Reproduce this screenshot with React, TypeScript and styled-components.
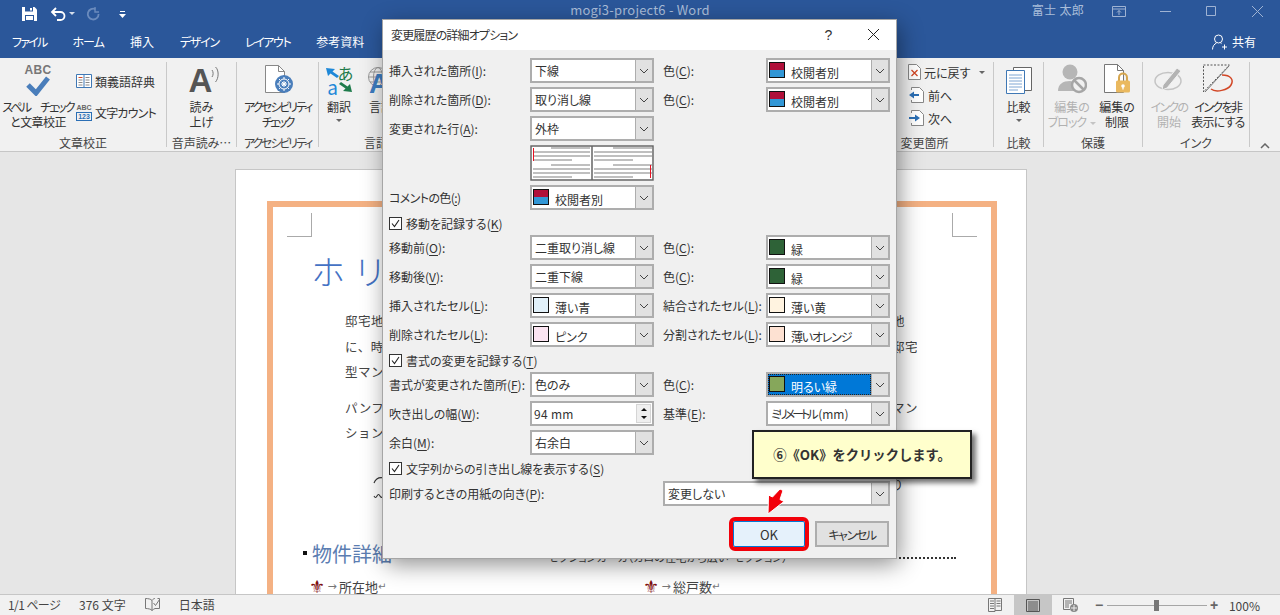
import styled, { createGlobalStyle } from "styled-components";
import type { ReactNode } from "react";

const GlobalStyle = createGlobalStyle`
  html, body { margin: 0; padding: 0; background: #e6e6e6; }
  body {
    font-family: "Noto Sans CJK JP", "Noto Sans", sans-serif;
    font-feature-settings: "palt";
    font-size: 12px;
    color: #333;
  }
  u { text-underline-offset: 2px; }
`;

const Root = styled.div`
  position: relative;
  width: 1280px;
  height: 615px;
  overflow: hidden;
  display: flex;
  flex-direction: column;
`;

// the reference uses Meiryo UI, whose kana are much narrower than Noto's
const Squeezed = styled.span<{ $by: number }>`
  letter-spacing: ${({ $by }) => $by}px;
`;

/* ---------- title bar and tabs ---------- */

const TitleBar = styled.div`
  height: 28px;
  flex: none;
  background: #2b579a;
  display: grid;
  grid-template-columns: 1fr auto 1fr;
  align-items: center;
  color: #a9bdd9;
`;

const QuickAccess = styled.div`
  display: flex;
  align-items: center;
  padding-left: 22px;
`;

const QuickIcon = styled.span<{ $w: number }>`
  display: flex;
  width: ${({ $w }) => $w}px;
`;

const WindowArea = styled.div`
  display: flex;
  align-items: center;
  justify-content: flex-end;
`;

const UserName = styled.span`
  margin-right: 12px;
  line-height: 20px;
  letter-spacing: 0.3px;
  position: relative;
  top: -4px;
`;

const WindowButton = styled.span`
  width: 46px;
  display: flex;
  justify-content: center;
  position: relative;
  top: -3px;
`;

const TitleText = styled.span`
  position: relative;
  top: -5px;
  font-size: 13px;
  letter-spacing: 0.2px;
`;

const TabBar = styled.div`
  height: 30px;
  flex: none;
  box-sizing: border-box;
  padding-bottom: 3px;
  background: #2b579a;
  display: flex;
  align-items: center;
  color: #fff;
`;

const Tab = styled.span`
  padding: 0 13px;
  &:first-child {
    margin-left: -1px;
  }
`;

const Share = styled.span`
  margin-left: auto;
  margin-right: 24px;
  display: flex;
  align-items: center;
  gap: 4px;
`;

/* ---------- ribbon ---------- */

const Ribbon = styled.div`
  height: 94px;
  flex: none;
  box-sizing: border-box;
  background: #f1f1f1;
  border-bottom: 1px solid #c6c6c6;
  padding-top: 4px;
  display: flex;
  position: relative;
`;

const Group = styled.div<{ $w: number; $plain?: boolean }>`
  width: ${({ $w }) => $w}px;
  height: 85px;
  flex: none;
  box-sizing: border-box;
  border-right: ${({ $plain }) => ($plain ? "none" : "1px solid #c9c9c9")};
  display: flex;
  flex-direction: column;
`;

const Tools = styled.div<{ $pad?: number }>`
  height: 74px;
  display: flex;
  padding-left: ${({ $pad }) => $pad ?? 0}px;
`;

const GroupLabel = styled.div`
  height: 14px;
  line-height: 14px;
  margin-bottom: -3px;
  text-align: center;
  white-space: nowrap;
  overflow: visible;
  color: #444;
`;

const BigButton = styled.div<{ $w: number; $off?: boolean }>`
  width: ${({ $w }) => $w}px;
  flex: none;
  display: flex;
  flex-direction: column;
  align-items: center;
  color: ${({ $off }) => ($off ? "#b1b1b1" : "#333")};
`;

const BigIcon = styled.div<{ $lift?: number }>`
  height: 37px;
  box-sizing: border-box;
  padding-bottom: ${({ $lift }) => $lift ?? 5}px;
  display: flex;
  align-items: flex-end;
  justify-content: center;
  position: relative;
  flex: none;
`;

const BigText = styled.div`
  line-height: 15px;
  text-align: center;
  white-space: nowrap;
`;

const Caret = styled.div`
  width: 0;
  height: 0;
  margin-top: 5px;
  border-left: 3px solid transparent;
  border-right: 3px solid transparent;
  border-top: 3px solid #666;
`;

const InlineCaret = styled(Caret)`
  margin: 0 0 0 6px;
`;

const TinyCaret = styled.span`
  display: inline-block;
  width: 0;
  height: 0;
  margin-left: 4px;
  vertical-align: middle;
  border-left: 3px solid transparent;
  border-right: 3px solid transparent;
  border-top: 3px solid #c4c4c4;
`;

const SmallColumn = styled.div<{ $gap: number; $top: number }>`
  display: flex;
  flex-direction: column;
  gap: ${({ $gap }) => $gap}px;
  padding-top: ${({ $top }) => $top}px;
`;

const SmallButton = styled.div`
  display: flex;
  align-items: center;
  gap: 3px;
  height: 18px;
  white-space: nowrap;
`;

const SpellAbc = styled.div`
  position: absolute;
  top: 2px;
  left: -4px;
  width: 32px;
  text-align: center;
  font: bold 12px/12px "Liberation Sans", sans-serif;
  letter-spacing: 0.3px;
  color: #777;
`;

const TinyAbcIcon = styled.div`
  width: 16px;
  display: flex;
  flex-direction: column;
  align-items: center;
  font: bold 7px/7px "Liberation Sans", sans-serif;
  color: #666;
`;

const TinyDigits = styled.span`
  margin-top: 1px;
  width: 14px;
  text-align: center;
  border: 1px solid #2b6fb5;
  color: #2b6fb5;
`;

const ReadLetter = styled.span`
  margin-left: 7px;
  font: bold 33px/26px "Liberation Sans", sans-serif;
  height: 26px;
  color: #555;
`;

const WaveHolder = styled.span`
  align-self: flex-start;
  margin: 4px 0 0 -1px;
  display: flex;
`;

const TranslateGrid = styled.div`
  display: grid;
  grid-template-columns: 13px 13px;
  grid-template-rows: 14px 14px;
  align-items: center;
  justify-items: center;
`;

const LangGlyph = styled.span<{ $color: string; $size: number }>`
  color: ${({ $color }) => $color};
  font-size: ${({ $size }) => $size}px;
  line-height: 14px;
  height: 14px;
`;

const GlobeStack = styled.div`
  position: relative;
  width: 30px;
  height: 28px;
`;

const GlobeLetter = styled.span`
  position: absolute;
  left: 3px;
  bottom: 0;
  height: 22px;
  font: bold 28px/23px "Liberation Sans", sans-serif;
  color: #3d7cc0;
`;

const ChevronUpMark = styled.div`
  position: absolute;
  left: 1260px;
  top: 85px;
  display: flex;
`;

/* ---------- document ---------- */

const DocArea = styled.div`
  flex: 1;
  min-height: 0;
  overflow: hidden;
  background: #e6e6e6;
  padding: 17px 0 0 235px;
`;

const Page = styled.div`
  width: 792px;
  height: 800px;
  box-sizing: border-box;
  background: #fff;
  border: 1px solid #c6c6c6;
  padding: 31px 29px 0 31px;
`;

const Frame = styled.div`
  height: 760px;
  box-sizing: content-box;
  border: 6px solid #f4b183;
  padding: 6px 14px 0;
`;

const CropRow = styled.div`
  display: flex;
  justify-content: space-between;
`;

const CropMark = styled.div<{ $side: "left" | "right" }>`
  width: 24px;
  height: 23px;
  border-bottom: 1px solid #aaa;
  ${({ $side }) => ($side === "left" ? "border-right" : "border-left")}: 1px solid #aaa;
`;

const DocTitle = styled.h1`
  margin: 14px 0 0 24px;
  font-size: 34px;
  line-height: 40px;
  font-weight: 300;
  letter-spacing: 8px;
  font-feature-settings: normal;
  color: #4472c4;
`;

const BodyLines = styled.div<{ $top: number }>`
  margin: ${({ $top }) => $top}px 60px 0 58px;
`;

const BodyLine = styled.div`
  height: 25.5px;
  line-height: 25.5px;
  display: flex;
  justify-content: space-between;
  font-size: 12.5px;
  letter-spacing: 0.5px;
  color: #444;
  font-feature-settings: normal;
  white-space: nowrap;
`;

const LineEnd = styled.span`
  width: 25px;
  overflow: hidden;
`;

const SymbolRow = styled.div`
  margin: 30px 60px 0 86px;
  height: 30px;
  display: flex;
  justify-content: space-between;
  align-items: flex-start;
`;

const HeadingRow = styled.div`
  margin: 38px 21px 0 16px;
  height: 22px;
  display: flex;
  align-items: flex-start;
`;

const HeadingBullet = styled.span`
  width: 4px;
  height: 4px;
  margin: 7px 5px 0 0;
  background: #111;
  flex: none;
`;

const SectionHeading = styled.h2`
  margin: 0;
  font-size: 20px;
  line-height: 20px;
  font-weight: 400;
  color: #5b7db1;
  white-space: nowrap;
  width: 92px;
  flex: none;
`;

const Leader = styled.div`
  flex: 1;
  height: 13px;
  border-bottom: 2px dotted #333;
  font-size: 11px;
  line-height: 26px;
  padding-left: 144px;
  white-space: nowrap;
  overflow: visible;
  color: #444;
`;

const SpecRow = styled.div`
  margin: 11px 0 0 24px;
  display: grid;
  grid-template-columns: 334px 1fr;
`;

const SpecItem = styled.div`
  display: flex;
  align-items: center;
  font-size: 13px;
  line-height: 20px;
  color: #444;
  font-feature-settings: normal;
`;

const Fleur = styled.span`
  font: 18px/20px "DejaVu Sans", sans-serif;
  color: #7f1010;
  width: 14px;
  margin-left: -2px;
  margin-right: 2px;
`;

const TabArrow = styled.span`
  font: 11px/20px "DejaVu Sans", sans-serif;
  color: #777;
  width: 14px;
  text-align: center;
`;

const ReturnMark = styled.span`
  font: 10px/20px "DejaVu Sans", sans-serif;
  color: #777;
`;

/* ---------- status bar ---------- */

const StatusBar = styled.div`
  height: 21px;
  flex: none;
  box-sizing: border-box;
  background: #f1f1f1;
  border-top: 1px solid #c6c6c6;
  display: flex;
  align-items: stretch;
  justify-content: space-between;
  color: #444;
  padding: 0 20px 0 8px;
`;

const StatusLeft = styled.div`
  display: flex;
  align-items: center;
  gap: 19px;
  padding-bottom: 1px;
`;

const StatusRight = styled.div`
  display: flex;
  align-items: stretch;
`;

const ViewButton = styled.div<{ $active?: boolean }>`
  width: 38px;
  display: flex;
  align-items: center;
  justify-content: center;
  background: ${({ $active }) => ($active ? "#c6c6c6" : "transparent")};
`;

const ZoomControl = styled.div`
  display: flex;
  align-items: center;
  margin-left: 5px;
`;

const ZoomSign = styled.span`
  width: 8px;
  font: bold 14px/14px "Liberation Sans", sans-serif;
  color: #666;
  text-align: center;
`;

const ZoomTrack = styled.div`
  position: relative;
  width: 100px;
  height: 1px;
  margin: 0 3px 0 4px;
  background: #a6a6a6;
`;

const ZoomThumb = styled.div`
  position: absolute;
  left: 47px;
  top: -5px;
  width: 5px;
  height: 11px;
  background: #777;
`;

const ZoomValue = styled.span`
  margin-left: 11px;
  font-size: 12px;
`;

/* ---------- dialog ---------- */

const Dialog = styled.div`
  position: absolute;
  left: 383px;
  top: 20px;
  width: 513px;
  height: 538px;
  box-sizing: border-box;
  background: #f0f0f0;
  box-shadow: 0 0 0 1px #a5a5a5, 3px 6px 22px rgba(0, 0, 0, 0.45);
  display: flex;
  flex-direction: column;
`;

const DialogHead = styled.div`
  height: 30px;
  flex: none;
  box-sizing: border-box;
  padding: 0 0 1px 8px;
  background: #fff;
  display: flex;
  align-items: center;
  color: #333;
`;

const DialogTitle = styled.span`
  flex: 1;
`;

const HelpMark = styled.span`
  width: 45px;
  text-align: center;
  font: 14px "Liberation Sans", sans-serif;
`;

const CloseMark = styled.span`
  width: 45px;
  display: flex;
  justify-content: center;
`;

const Form = styled.div`
  padding: 8px 0 0 6px;
`;

const Row = styled.div`
  display: grid;
  grid-template-columns: 141px 124px 112px 124px;
  height: 25px;
  margin-bottom: 4px;
  align-items: center;
  white-space: nowrap;
`;

const PreviewRow = styled(Row)`
  height: 36px;
`;

const FieldLabel = styled.label<{ $wide?: boolean }>`
  padding-bottom: 1px;
  ${({ $wide }) => ($wide ? "grid-column: 1 / 3;" : "")}
`;

const SideLabel = styled.label`
  grid-column: 3;
  padding: 0 0 1px 9px;
`;

const Combo = styled.div<{ $wide?: boolean }>`
  ${({ $wide }) => ($wide ? "grid-column: 3 / 5; margin-left: 9px;" : "")}
  height: 25px;
  box-sizing: border-box;
  border: 2px solid #adadad;
  border-right-width: 1px;
  background: #fff;
  display: flex;
  align-items: stretch;
`;

const ComboValue = styled.div<{ $picked?: boolean }>`
  flex: 1;
  min-width: 0;
  display: flex;
  align-items: center;
  gap: 6px;
  padding: 0 0 1px 3px;
  ${({ $picked }) =>
    $picked
      ? `background: #0078d7; color: #fff; outline: 1px dotted #222; outline-offset: -1px;`
      : ""}
`;

const ComboText = styled.span`
  position: relative;
  top: 2px;
`;

const ComboArrow = styled.div`
  width: 16px;
  flex: none;
  background: #e1e1e1;
  border-left: 1px solid #adadad;
  border-right: 1px solid #adadad;
  display: flex;
  align-items: center;
  justify-content: center;
`;

const Swatch = styled.span<{ $top: string; $bottom?: string }>`
  width: 14px;
  height: 14px;
  flex: none;
  align-self: flex-start;
  margin: 2px 0 0 -2px;
  border: 1px solid #111;
  background: linear-gradient(
    ${({ $top }) => $top} 50%,
    ${({ $top, $bottom }) => $bottom ?? $top} 50%
  );
`;

const SpinBox = styled.div`
  height: 25px;
  box-sizing: border-box;
  border: 2px solid #adadad;
  background: #fff;
  display: flex;
  align-items: center;
  justify-content: space-between;
  padding: 0 0 0 2px;
  letter-spacing: 0.3px;
`;

const SpinButtons = styled.div`
  width: 15px;
  height: 19px;
  display: flex;
  flex-direction: column;
  align-items: center;
  justify-content: space-around;
  background: #efefef;
  border: 1px solid #d5d5d5;
  box-sizing: border-box;
  margin-right: 1px;
`;

const SpinTriangle = styled.span<{ $up?: boolean }>`
  width: 0;
  height: 0;
  border-left: 3px solid transparent;
  border-right: 3px solid transparent;
  ${({ $up }) => ($up ? "border-bottom" : "border-top")}: 3px solid #111;
`;

const CheckRow = styled.label<{ $late?: boolean }>`
  height: 18px;
  margin: ${({ $late }) => ($late ? "2px 0 4px" : "1px 0 3px")};
  display: flex;
  align-items: center;
  gap: 4px;
  white-space: nowrap;
`;

const CheckBox = styled.span`
  width: 11px;
  height: 11px;
  border: 1px solid #333;
  background: #fff;
  display: flex;
  align-items: center;
  justify-content: center;
`;

const DialogButtons = styled.div`
  display: flex;
  justify-content: flex-end;
  gap: 10px;
  margin-top: 15px;
  padding-right: 7px;
`;

const ActionButton = styled.button<{ $primary?: boolean }>`
  font: inherit;
  font-size: ${({ $primary }) => ($primary ? 13 : 12)}px;
  color: #333;
  padding: 0;
  height: 26px;
  width: ${({ $primary }) => ($primary ? 72 : 74)}px;
  background: ${({ $primary }) => ($primary ? "#e5f1fb" : "#e1e1e1")};
  border: ${({ $primary }) => ($primary ? "1px solid #0078d7" : "2px solid #adadad")};
  ${({ $primary }) =>
    $primary ? "outline: 4px solid #f2000a; outline-offset: 0; border-radius: 2px;" : ""}
`;

/* ---------- annotation ---------- */

const Callout = styled.div`
  position: absolute;
  left: 752px;
  top: 430px;
  width: 220px;
  height: 49px;
  box-sizing: border-box;
  background: #ffffcc;
  border: 2px solid #222;
  box-shadow: 4px 4px 5px rgba(0, 0, 0, 0.55);
  display: flex;
  align-items: center;
  justify-content: center;
  font-size: 13.3px;
  font-weight: 700;
  font-feature-settings: normal;
  white-space: nowrap;
  color: #333;
`;

const PointerArrow = styled.svg`
  position: absolute;
  left: 762px;
  top: 486px;
`;

/* ---------- drawings ---------- */

const Chevron = () => (
  <svg width="10" height="6" viewBox="0 0 10 6">
    <path d="M1 1l4 4 4-4" fill="none" stroke="#444" />
  </svg>
);

const Tick = () => (
  <svg width="9" height="9" viewBox="0 0 9 9">
    <path d="M1 4.500l2.500 3L8 1" fill="none" stroke="#222" strokeWidth="1.100" />
  </svg>
);

const SaveIcon = () => (
  <svg width="15" height="14" viewBox="0 0 15 14">
    <path d="M0 0h12.500L15 2.500V14H0z" fill="#fff" />
    <path d="M3 0h8v4.500H3z" fill="#2b579a" />
    <path d="M8 1h2v2.500H8z" fill="#fff" />
    <path d="M3 8h9v6H3z" fill="#2b579a" />
    <path d="M4 9h7v4H4z" fill="#fff" />
  </svg>
);

const UndoIcon = () => (
  <svg width="26" height="14" viewBox="0 0 26 14">
    <path d="M2 5h8.500a3.800 3.800 0 0 1 0 8H7" fill="none" stroke="#fff" strokeWidth="1.800" />
    <path d="M6 1L2 5l4 4" fill="none" stroke="#fff" strokeWidth="1.800" />
    <path d="M19 5h6l-3 3z" fill="#d5deeb" />
  </svg>
);

const RedoIcon = () => (
  <svg width="14" height="14" viewBox="0 0 14 14">
    <path d="M9.500 2.200A5.400 5.400 0 1 0 12.600 7" fill="none" stroke="#6b8bbd" strokeWidth="1.800" />
    <path d="M9 0v5h4" fill="none" stroke="#6b8bbd" strokeWidth="1.400" />
  </svg>
);

const CustomizeIcon = () => (
  <svg width="7" height="8" viewBox="0 0 7 8">
    <path d="M1 1h5v1H1z" fill="#fff" />
    <path d="M0 4h7L3.500 8z" fill="#fff" />
  </svg>
);

const RibbonDisplayIcon = () => (
  <svg width="14" height="11" viewBox="0 0 14 11">
    <path d="M.5.500h13v10H.5zM.5 3h13M7 9V4.500M5 6.500l2-2 2 2" fill="none" stroke="#9fb3d3" />
  </svg>
);

const MinimizeIcon = () => (
  <svg width="11" height="10" viewBox="0 0 11 10">
    <path d="M0 5.500h11" stroke="#9fb3d3" />
  </svg>
);

const MaximizeIcon = () => (
  <svg width="10" height="10" viewBox="0 0 10 10">
    <path d="M.5.500h9v9h-9z" fill="none" stroke="#9fb3d3" />
  </svg>
);

const CloseIcon = ({ color, size }: { color: string; size: number }) => (
  <svg width={size} height={size} viewBox="0 0 10 10">
    <path d="M0 0l10 10M10 0L0 10" stroke={color} strokeWidth={10 / size} />
  </svg>
);

const ShareIcon = () => (
  <svg width="16" height="16" viewBox="0 0 16 16">
    <circle cx="6.500" cy="5" r="4" fill="none" stroke="#fff" />
    <path d="M0.500 15.500c0-3.500 2-5.500 4-6.500M8.500 9l1 .6M10 13h5M12.500 10.500v5" fill="none" stroke="#fff" />
  </svg>
);

const CheckMark = () => (
  <svg width="24" height="21" viewBox="0 0 24 21">
    <path d="M2 10l8 8L22 3" fill="none" stroke="#4a7ebb" strokeWidth="5" />
  </svg>
);

const BookIcon = () => (
  <svg width="16" height="14" viewBox="0 0 16 14">
    <path d="M.5.500h15v13H.500z" fill="#fff" stroke="#3f78b5" />
    <path d="M8 1v12" stroke="#3f78b5" />
    <path d="M2.500 3.500h4" stroke="#d24726" />
    <path d="M2.500 6h4M2.500 8.500h4M2.500 11h4M9.500 3.500h4M9.500 6h4M9.500 8.500h4M9.500 11h4" stroke="#888" />
  </svg>
);

const SoundWaves = () => (
  <svg width="10" height="17" viewBox="0 0 10 17">
    <path d="M1 4c1.500 2 1.500 5 0 7M4.500 1c3.500 3 3.500 11 0 15" fill="none" stroke="#777" />
  </svg>
);

const AccessibilityIcon = () => (
  <svg width="32" height="29" viewBox="0 0 32 29">
    <path d="M3.500.5h13l6 6v21h-19z" fill="#fff" stroke="#888" />
    <path d="M16.500.5v6h6" fill="none" stroke="#888" />
    <circle cx="22" cy="19" r="9" fill="#4a7ebb" />
    <circle cx="22" cy="19" r="5" fill="none" stroke="#fff" />
    <path d="M22 12v14M15 19h14M17 14l10 10M27 14L17 24" stroke="#fff" strokeDasharray="2 2" />
    <circle cx="22" cy="19" r="1.500" fill="#fff" />
  </svg>
);

const LeftArrowBlue = () => (
  <svg width="13" height="12" viewBox="0 0 13 12">
    <path d="M0 1l9 1-2.500 2.500L13 9l-2 2-6.500-4.500L2 9z" fill="#1e88d8" />
  </svg>
);

const RightArrowGreen = () => (
  <svg width="13" height="12" viewBox="0 0 13 12">
    <path d="M13 11l-9-1 2.500-2.500L0 3l2-2 6.500 4.500L11 3z" fill="#1e7b4b" />
  </svg>
);

const GlobeIcon = () => (
  <svg width="30" height="22" viewBox="0 0 30 22">
    <g fill="none" stroke="#999">
      <circle cx="12" cy="11" r="9.500" />
      <ellipse cx="12" cy="11" rx="4.500" ry="9.500" />
      <path d="M2.500 11h19M4 6h16M4 16h16" />
    </g>
  </svg>
);

const RejectIcon = () => (
  <svg width="13" height="16" viewBox="0 0 13 16">
    <path d="M.5.500h8l4 4v11H.500z" fill="#fff" stroke="#888" />
    <path d="M3.500 6l6 6M9.500 6l-6 6" stroke="#d24726" strokeWidth="1.300" />
  </svg>
);

const StepIcon = ({ back }: { back?: boolean }) => (
  <svg width="17" height="16" viewBox="0 0 17 16">
    <path d="M3.500 3V.5h8l4 4v11h-12V13" fill="#fff" stroke="#888" />
    {back ? (
      <path d="M11 7H6V4.500L1 8l5 3.500V9h5z" fill="#2b6fb5" />
    ) : (
      <path d="M1 7h6V4.500L12 8l-5 3.500V9H1z" fill="#2b6fb5" />
    )}
  </svg>
);

const CompareIcon = () => (
  <svg width="26" height="27" viewBox="0 0 26 27">
    <path d="M7.500.5h18v23h-18z" fill="#fff" stroke="#666" />
    <path d="M.5 3.500h18v23H.500z" fill="#fff" stroke="#3f78b5" />
    <path d="M3 8h13M3 11h13M3 14h13M3 17h13M3 20h13M3 23h9" stroke="#7fa6d3" />
  </svg>
);

const BlockIcon = () => (
  <svg width="30" height="30" viewBox="0 0 30 30">
    <circle cx="13" cy="8" r="7.500" fill="#b6b6b6" />
    <path d="M1 27c0-7 5-10 12-10s6 10 4 10z" fill="#b6b6b6" />
    <circle cx="22" cy="21" r="7" fill="#f1f1f1" stroke="#a6a6a6" strokeWidth="2.500" />
    <path d="M17 16l10 10" stroke="#a6a6a6" strokeWidth="2.500" />
  </svg>
);

const RestrictIcon = () => (
  <svg width="28" height="30" viewBox="0 0 28 30">
    <path d="M1.500.5h13l6 6v22h-19z" fill="#fff" stroke="#777" />
    <path d="M14.500.5v6h6" fill="none" stroke="#777" />
    <path d="M16 17v-3.500a4 4 0 0 1 8 0V17" fill="none" stroke="#d6a64f" strokeWidth="2" />
    <rect x="13" y="16.500" width="14" height="12" rx="1.500" fill="#eab95f" />
    <circle cx="20" cy="22" r="1.800" fill="#fff" />
    <path d="M20 22v3.500" stroke="#fff" strokeWidth="1.300" />
  </svg>
);

const InkStartIcon = () => (
  <svg width="30" height="30" viewBox="0 0 30 30">
    <ellipse cx="14" cy="17" rx="13" ry="8.500" fill="none" stroke="#c4c4c4" strokeWidth="1.500" />
    <path d="M9 21L23 4l4 3-14 17-5 2z" fill="#b3b3b3" stroke="#f1f1f1" />
  </svg>
);

const InkHideIcon = () => (
  <svg width="33" height="30" viewBox="0 0 33 30">
    <path d="M1.500 1h26L1.500 28z" fill="none" stroke="#555" strokeDasharray="2 1.500" />
    <path d="M3 28L27 2" stroke="#777" />
    <path d="M20 11c9 0 12 5 9 10s-15 8-20 4" fill="none" stroke="#d24726" strokeWidth="1.500" />
  </svg>
);

const CollapseIcon = () => (
  <svg width="10" height="6" viewBox="0 0 10 6">
    <path d="M1 5l4-4 4 4" fill="none" stroke="#666" strokeWidth="1.500" />
  </svg>
);

const LinePreview = () => (
  <svg width="124" height="36" viewBox="0 0 124 36">
    <rect width="124" height="36" fill="#fff" />
    <path d="M1 1h122v34H1zM62 1v34" fill="none" stroke="#666" strokeWidth="1.500" />
    <g stroke="#aaa" strokeWidth="1.500">
      <path d="M21 3h39M3 7h57M3 11h57M3 15h39M21 20h39M3 24h57M3 28h57M3 32h39" />
      <path d="M83 3h39M64 7h58M64 11h58M64 15h39M83 20h39M64 24h58M64 28h58M64 32h39" />
    </g>
    <path d="M3.500 3v13M120.500 20v13" stroke="#e81123" />
  </svg>
);

const WaveMark = () => (
  <svg width="12" height="24" viewBox="0 0 12 24">
    <path d="M1 7C3 2 7 1 11 2M1 20c1 2 2 2 3 0s2-2 3 0 2 2 4-1" fill="none" stroke="#333" strokeWidth="1.100" />
  </svg>
);

const ProofIcon = () => (
  <svg width="15" height="13" viewBox="0 0 15 13">
    <path d="M7 2.500C6 1 3 .5.500.5v10c2.500 0 5.500.500 6.500 2V2.500c1-1.500 2-2 3-2M7 12.500c1-1 2-1.500 3-2h4.500v-10h-2" fill="none" stroke="#777" />
    <path d="M8.500 5l2 2.500 4-6" fill="none" stroke="#777" />
  </svg>
);

const ReadViewIcon = () => (
  <svg width="14" height="14" viewBox="0 0 14 14">
    <path d="M.5.500H7v13H.5zM7 .500h6.500v12H7" fill="none" stroke="#777" />
    <path d="M2 3h4M2 5.500h4M2 8h4M2 10.500h4M8.500 3h4M8.500 5.500h4M8.500 8h4" stroke="#777" />
  </svg>
);

const PrintViewIcon = () => (
  <svg width="14" height="13" viewBox="0 0 14 13">
    <path d="M.5.500h13v12H.5z" fill="none" stroke="#555" />
    <path d="M2 3h10M2 5h10M2 7h10M2 9h10M2 11h10" stroke="#555" />
  </svg>
);

const WebViewIcon = () => (
  <svg width="15" height="14" viewBox="0 0 15 14">
    <path d="M.5.500h10v9" fill="none" stroke="#777" />
    <path d="M.5.500v11H7M2 3h7M2 5h7M2 7h4M2 9h4" fill="none" stroke="#777" />
    <circle cx="11" cy="10" r="4" fill="#888" />
    <path d="M8 10h6M11 7v6" stroke="#eee" />
  </svg>
);

/* ---------- data ---------- */

const accent = "#b0103a";
const blue = "#3297d6";
const green = "#2e6237";

const lbl = (text: string, key: string, tail = ":") => (
  <>
    {text}(<u>{key}</u>){tail}
  </>
);

const ComboBox = ({ children, wide }: { children: ReactNode; wide?: boolean }) => (
  <Combo $wide={wide}>
    <ComboValue>{children}</ComboValue>
    <ComboArrow>
      <Chevron />
    </ComboArrow>
  </Combo>
);

const ColorValue = ({ top, bottom, name, squeeze = 0 }: { top: string; bottom?: string; name: string; squeeze?: number }) => (
  <>
    <Swatch $top={top} $bottom={bottom} />
    <ComboText>
      <Squeezed $by={squeeze}>{name}</Squeezed>
    </ComboText>
  </>
);

const byReviewer = <ColorValue top={accent} bottom={blue} name="校閲者別" />;

export default function App() {
  return (
    <Root>
      <GlobalStyle />

      <TitleBar>
        <QuickAccess>
          <QuickIcon $w={28}>
            <SaveIcon />
          </QuickIcon>
          <QuickIcon $w={36}>
            <UndoIcon />
          </QuickIcon>
          <QuickIcon $w={33}>
            <RedoIcon />
          </QuickIcon>
          <QuickIcon $w={7}>
            <CustomizeIcon />
          </QuickIcon>
        </QuickAccess>
        <TitleText>mogi3-project6 - Word</TitleText>
        <WindowArea>
          <UserName>富士 太郎</UserName>
          <WindowButton>
            <RibbonDisplayIcon />
          </WindowButton>
          <WindowButton>
            <MinimizeIcon />
          </WindowButton>
          <WindowButton>
            <MaximizeIcon />
          </WindowButton>
          <WindowButton>
            <CloseIcon color="#9fb3d3" size={11} />
          </WindowButton>
        </WindowArea>
      </TitleBar>

      <TabBar>
        <Tab>
          <Squeezed $by={-1.75}>ファイル</Squeezed>
        </Tab>
        <Tab>
          <Squeezed $by={-1}>ホーム</Squeezed>
        </Tab>
        <Tab>挿入</Tab>
        <Tab>
          <Squeezed $by={-1.25}>デザイン</Squeezed>
        </Tab>
        <Tab>
          <Squeezed $by={-1.4}>レイアウト</Squeezed>
        </Tab>
        <Tab>参考資料</Tab>
        <Share>
          <ShareIcon />
          共有
        </Share>
      </TabBar>

      <Ribbon>
        <Group $w={167}>
          <Tools>
            <BigButton $w={76}>
              <BigIcon $lift={3}>
                <SpellAbc>ABC</SpellAbc>
                <CheckMark />
              </BigIcon>
              <BigText>
                <Squeezed $by={-1.9}>スペル　チェック</Squeezed>
                <br />
                <Squeezed $by={-0.6}>と文章校正</Squeezed>
              </BigText>
            </BigButton>
            <SmallColumn $gap={13} $top={10}>
              <SmallButton>
                <BookIcon />
                類義語辞典
              </SmallButton>
              <SmallButton>
                <TinyAbcIcon>
                  ABC
                  <TinyDigits>123</TinyDigits>
                </TinyAbcIcon>
                <Squeezed $by={-0.8}>文字カウント</Squeezed>
              </SmallButton>
            </SmallColumn>
          </Tools>
          <GroupLabel>文章校正</GroupLabel>
        </Group>

        <Group $w={70}>
          <Tools>
            <BigButton $w={69}>
              <BigIcon>
                <ReadLetter>A</ReadLetter>
                <WaveHolder>
                  <SoundWaves />
                </WaveHolder>
              </BigIcon>
              <BigText>
                読み
                <br />
                上げ
              </BigText>
            </BigButton>
          </Tools>
          <GroupLabel>音声読み…</GroupLabel>
        </Group>

        <Group $w={82}>
          <Tools>
            <BigButton $w={81}>
              <BigIcon>
                <AccessibilityIcon />
              </BigIcon>
              <BigText>
                <Squeezed $by={-2.1}>アクセシビリティ</Squeezed>
                <br />
                <Squeezed $by={-2.5}>チェック</Squeezed>
              </BigText>
            </BigButton>
          </Tools>
          <GroupLabel>
            <Squeezed $by={-2.1}>アクセシビリティ</Squeezed>
          </GroupLabel>
        </Group>

        <Group $w={114} $plain>
          <Tools $pad={1}>
            <BigButton $w={38}>
              <BigIcon>
                <TranslateGrid>
                  <LeftArrowBlue />
                  <LangGlyph $color="#1e7b4b" $size={16}>
                    あ
                  </LangGlyph>
                  <LangGlyph $color="#1e88d8" $size={19}>
                    a
                  </LangGlyph>
                  <RightArrowGreen />
                </TranslateGrid>
              </BigIcon>
              <BigText>翻訳</BigText>
              <Caret />
            </BigButton>
            <BigButton $w={46}>
              <BigIcon>
                <GlobeStack>
                  <GlobeIcon />
                  <GlobeLetter>A</GlobeLetter>
                </GlobeStack>
              </BigIcon>
              <BigText>言語</BigText>
            </BigButton>
          </Tools>
          <GroupLabel>言語</GroupLabel>
        </Group>

        <Group $w={423} $plain />

        <Group $w={138}>
          <Tools $pad={52}>
            <SmallColumn $gap={5} $top={1}>
              <SmallButton>
                <RejectIcon />
                元に戻す
                <InlineCaret />
              </SmallButton>
              <SmallButton>
                <StepIcon back />
                前へ
              </SmallButton>
              <SmallButton>
                <StepIcon />
                次へ
              </SmallButton>
            </SmallColumn>
          </Tools>
          <GroupLabel>変更箇所</GroupLabel>
        </Group>

        <Group $w={50}>
          <Tools>
            <BigButton $w={49}>
              <BigIcon>
                <CompareIcon />
              </BigIcon>
              <BigText>比較</BigText>
              <Caret />
            </BigButton>
          </Tools>
          <GroupLabel>比較</GroupLabel>
        </Group>

        <Group $w={99}>
          <Tools $pad={3}>
            <BigButton $w={50} $off>
              <BigIcon>
                <BlockIcon />
              </BigIcon>
              <BigText>
                編集の
                <br />
                <Squeezed $by={-1}>ブロック</Squeezed>
                <TinyCaret />
              </BigText>
            </BigButton>
            <BigButton $w={40}>
              <BigIcon>
                <RestrictIcon />
              </BigIcon>
              <BigText>
                編集の
                <br />
                制限
              </BigText>
            </BigButton>
          </Tools>
          <GroupLabel>保護</GroupLabel>
        </Group>

        <Group $w={107}>
          <Tools $pad={5}>
            <BigButton $w={42} $off>
              <BigIcon>
                <InkStartIcon />
              </BigIcon>
              <BigText>
                <Squeezed $by={-1.7}>インクの</Squeezed>
                <br />
                開始
              </BigText>
            </BigButton>
            <BigButton $w={56}>
              <BigIcon>
                <InkHideIcon />
              </BigIcon>
              <BigText>
                <Squeezed $by={-1.6}>インクを非</Squeezed>
                <br />
                <Squeezed $by={-0.8}>表示にする</Squeezed>
              </BigText>
            </BigButton>
          </Tools>
          <GroupLabel>インク</GroupLabel>
        </Group>
        <ChevronUpMark>
          <CollapseIcon />
        </ChevronUpMark>
      </Ribbon>

      <DocArea>
        <Page>
          <Frame>
            <CropRow>
              <CropMark $side="left" />
              <CropMark $side="right" />
            </CropRow>
            <DocTitle>ホリ</DocTitle>
            <BodyLines $top={17}>
              <BodyLine>
                <span>邸宅地</span>
                <LineEnd>地</LineEnd>
              </BodyLine>
              <BodyLine>
                <span>に、時</span>
                <LineEnd>邸宅</LineEnd>
              </BodyLine>
              <BodyLine>
                <span>型マン</span>
              </BodyLine>
            </BodyLines>
            <BodyLines $top={10}>
              <BodyLine>
                <span>パンフ</span>
                <LineEnd>マン</LineEnd>
              </BodyLine>
              <BodyLine>
                <span>ション</span>
              </BodyLine>
            </BodyLines>
            <SymbolRow>
              <WaveMark />
              <LineEnd>り</LineEnd>
            </SymbolRow>
            <HeadingRow>
              <HeadingBullet />
              <SectionHeading>物件詳細</SectionHeading>
              <Leader>セクションカーカ（カロの住宅から広い・セクション）</Leader>
            </HeadingRow>
            <SpecRow>
              <SpecItem>
                <Fleur>⚜</Fleur>
                <TabArrow>→</TabArrow>
                所在地
                <ReturnMark>↵</ReturnMark>
              </SpecItem>
              <SpecItem>
                <Fleur>⚜</Fleur>
                <TabArrow>→</TabArrow>
                総戸数
                <ReturnMark>↵</ReturnMark>
              </SpecItem>
            </SpecRow>
          </Frame>
        </Page>
      </DocArea>

      <StatusBar>
        <StatusLeft>
          <Squeezed $by={-0.6}>1/1 ページ</Squeezed>
          <span>376 文字</span>
          <ProofIcon />
          <span>日本語</span>
        </StatusLeft>
        <StatusRight>
          <ViewButton>
            <ReadViewIcon />
          </ViewButton>
          <ViewButton $active>
            <PrintViewIcon />
          </ViewButton>
          <ViewButton>
            <WebViewIcon />
          </ViewButton>
          <ZoomControl>
            <ZoomSign>−</ZoomSign>
            <ZoomTrack>
              <ZoomThumb />
            </ZoomTrack>
            <ZoomSign>+</ZoomSign>
            <ZoomValue>100%</ZoomValue>
          </ZoomControl>
        </StatusRight>
      </StatusBar>

      <Dialog>
        <DialogHead>
          <DialogTitle>
            <Squeezed $by={-0.85}>変更履歴の詳細オプション</Squeezed>
          </DialogTitle>
          <HelpMark>?</HelpMark>
          <CloseMark>
            <CloseIcon color="#222" size={11} />
          </CloseMark>
        </DialogHead>
        <Form>
          <Row>
            <FieldLabel>{lbl("挿入された箇所", "I")}</FieldLabel>
            <ComboBox>下線</ComboBox>
            <SideLabel>{lbl("色", "C")}</SideLabel>
            <ComboBox>{byReviewer}</ComboBox>
          </Row>
          <Row>
            <FieldLabel>{lbl("削除された箇所", "D")}</FieldLabel>
            <ComboBox>取り消し線</ComboBox>
            <SideLabel>{lbl("色", "C")}</SideLabel>
            <ComboBox>{byReviewer}</ComboBox>
          </Row>
          <Row>
            <FieldLabel>{lbl("変更された行", "A")}</FieldLabel>
            <ComboBox>外枠</ComboBox>
          </Row>
          <PreviewRow>
            <span />
            <LinePreview />
          </PreviewRow>
          <Row>
            <FieldLabel>
              <Squeezed $by={-0.6}>{lbl("コメントの色", ":", "")}</Squeezed>
            </FieldLabel>
            <ComboBox>{byReviewer}</ComboBox>
          </Row>
          <CheckRow>
            <CheckBox>
              <Tick />
            </CheckBox>
            <span>{lbl("移動を記録する", "K", "")}</span>
          </CheckRow>
          <Row>
            <FieldLabel>{lbl("移動前", "O")}</FieldLabel>
            <ComboBox>二重取り消し線</ComboBox>
            <SideLabel>{lbl("色", "C")}</SideLabel>
            <ComboBox>
              <ColorValue top={green} name="緑" />
            </ComboBox>
          </Row>
          <Row>
            <FieldLabel>{lbl("移動後", "V")}</FieldLabel>
            <ComboBox>二重下線</ComboBox>
            <SideLabel>{lbl("色", "C")}</SideLabel>
            <ComboBox>
              <ColorValue top={green} name="緑" />
            </ComboBox>
          </Row>
          <Row>
            <FieldLabel>{lbl("挿入されたセル", "L")}</FieldLabel>
            <ComboBox>
              <ColorValue top="#e1f0f9" name="薄い青" />
            </ComboBox>
            <SideLabel>{lbl("結合されたセル", "L")}</SideLabel>
            <ComboBox>
              <ColorValue top="#fff3e0" name="薄い黄" />
            </ComboBox>
          </Row>
          <Row>
            <FieldLabel>{lbl("削除されたセル", "L")}</FieldLabel>
            <ComboBox>
              <ColorValue top="#fbe4f1" name="ピンク" />
            </ComboBox>
            <SideLabel>{lbl("分割されたセル", "L")}</SideLabel>
            <ComboBox>
              <ColorValue top="#fde1d2" name="薄いオレンジ" squeeze={-1.2} />
            </ComboBox>
          </Row>
          <CheckRow>
            <CheckBox>
              <Tick />
            </CheckBox>
            <span>{lbl("書式の変更を記録する", "T", "")}</span>
          </CheckRow>
          <Row>
            <FieldLabel>{lbl("書式が変更された箇所", "F")}</FieldLabel>
            <ComboBox>色のみ</ComboBox>
            <SideLabel>{lbl("色", "C")}</SideLabel>
            <Combo>
              <ComboValue $picked>
                <ColorValue top="#86a75b" name="明るい緑" />
              </ComboValue>
              <ComboArrow>
                <Chevron />
              </ComboArrow>
            </Combo>
          </Row>
          <Row>
            <FieldLabel>{lbl("吹き出しの幅", "W")}</FieldLabel>
            <SpinBox>
              94 mm
              <SpinButtons>
                <SpinTriangle $up />
                <SpinTriangle />
              </SpinButtons>
            </SpinBox>
            <SideLabel>{lbl("基準", "E")}</SideLabel>
            <ComboBox>
              <span>
                <Squeezed $by={-3}>ミリメートル</Squeezed> (mm)
              </span>
            </ComboBox>
          </Row>
          <Row>
            <FieldLabel>{lbl("余白", "M")}</FieldLabel>
            <ComboBox>右余白</ComboBox>
          </Row>
          <CheckRow $late>
            <CheckBox>
              <Tick />
            </CheckBox>
            <span>{lbl("文字列からの引き出し線を表示する", "S", "")}</span>
          </CheckRow>
          <Row>
            <FieldLabel $wide>{lbl("印刷するときの用紙の向き", "P")}</FieldLabel>
            <ComboBox wide>変更しない</ComboBox>
          </Row>
          <DialogButtons>
            <ActionButton $primary>OK</ActionButton>
            <ActionButton>
              <Squeezed $by={-1.4}>キャンセル</Squeezed>
            </ActionButton>
          </DialogButtons>
        </Form>
      </Dialog>

      <Callout>⑥《OK》をクリックします。</Callout>
      <PointerArrow width="24" height="32" viewBox="0 0 24 32">
        <path d="M18 3l3 1.500-3 9 4 2L6 28 6.500 9l4 2z" fill="#f2000a" stroke="#fff" strokeWidth="1" />
      </PointerArrow>
    </Root>
  );
}
